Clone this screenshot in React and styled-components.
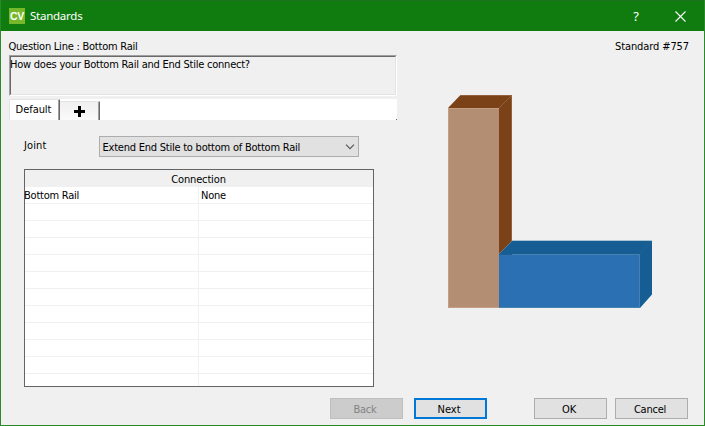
import React from "react";
import styled, { createGlobalStyle } from "styled-components";

const Global = createGlobalStyle`
  * { box-sizing: border-box; }
  body { margin: 0; background: #f0f0f0; }
`;

const Window = styled.div`
  width: 705px;
  height: 426px;
  display: flex;
  flex-direction: column;
  background: #f0f0f0;
  border: 1px solid #2a8a2a;
  border-top: 0;
  color: #000;
  font: 11px/14px "DejaVu Sans Condensed", "DejaVu Sans", sans-serif;
  font-stretch: condensed;
  overflow: hidden;
`;

const Text = styled.span`
  white-space: pre;
  letter-spacing: ${(p) => p.$ls ?? -0.23}px;
  margin-left: ${(p) => p.$shift || 0}px;
`;

const TitleBar = styled.header`
  height: 31px;
  flex: none;
  margin: 0 -1px;
  padding: 0 19px 0 9px;
  display: flex;
  align-items: center;
  background: #107c10;
  border-top: 1px solid #1c751c;
  color: #fff;
  font: 11.5px/16px "Noto Sans", sans-serif;
`;

const Logo = styled.span`
  width: 16px;
  height: 16px;
  margin-right: 5px;
  background: #76b82a;
  font: bold 10.5px/16px "Liberation Sans", sans-serif;
  text-align: center;
  letter-spacing: -0.3px;
`;

const TitleIcons = styled.div`
  margin-left: auto;
  display: flex;
  align-items: center;
  gap: 36px;
`;

const HelpMark = styled.span`
  font-size: 13px;
`;

const Content = styled.main`
  flex: none;
  height: 356px;
  display: flex;
`;

const Left = styled.section`
  width: 388px;
  margin-left: 8px;
  padding-top: 9px;
  display: flex;
  flex-direction: column;
`;

const Right = styled.section`
  flex: 1;
  padding: 9px 15px 0 0;
  display: flex;
  flex-direction: column;
  align-items: flex-end;
`;

const Question = styled.div`
  height: 41px;
  margin-top: 1px;
  border: 1px solid;
  border-color: #a0a0a0 #fff #fff #a0a0a0;
`;

const QuestionInner = styled.div`
  height: 39px;
  border: 1px solid;
  border-color: #696969 #e3e3e3 #e3e3e3 #696969;
  line-height: 15px;
`;

const Tabs = styled.div`
  height: 21px;
  margin-top: 3px;
  background: linear-gradient(#696969, #696969) right bottom / 1px 1px no-repeat #fff;
  display: flex;
  align-items: flex-end;
`;

const Tab = styled.div`
  width: ${(p) => p.$w}px;
  height: ${(p) => p.$h}px;
  border-top: 1px solid #e3e3e3;
  border-left: ${(p) => (p.$active ? "1px solid #e3e3e3" : "0")};
  border-right: 1px solid #696969;
  box-shadow: inset -1px 0 #a0a0a0;
  border-top-right-radius: 1px;
  background: ${(p) => (p.$active ? "#fff" : "linear-gradient(#f0f0f0, #fafafa)")};
  display: flex;
  align-items: center;
  justify-content: center;
  padding: 0 2px ${(p) => (p.$active ? 1 : 3)}px 0;
`;

const Plus = styled.svg`
  margin-top: 4px;
  margin-left: 1px;
`;

const Field = styled.div`
  display: flex;
  align-items: flex-start;
  margin: 16px 0 0 15px;
`;

const FieldLabel = styled.label`
  width: 75px;
  padding-top: 3px;
`;

const Select = styled.div`
  width: 260px;
  height: 21px;
  padding: 2px 3px 0 3px;
  display: flex;
  align-items: center;
  justify-content: space-between;
  background: #e1e1e1;
  border: 1px solid #adadad;
`;

const Chevron = styled.svg`
  margin-bottom: 1px;
`;

const Table = styled.div`
  width: 350px;
  height: 218px;
  margin: 12px 0 0 15px;
  border: 1px solid #646464;
  background: #fff;
`;

const TableHead = styled.div`
  height: 17px;
  background: #f0f0f0;
  text-align: center;
  line-height: 19px;
`;

const TableBody = styled.div`
  height: 199px;
  display: flex;
  flex-direction: column;
`;

const Row = styled.div`
  flex: 0 1 17px;
  height: 17px;
  min-height: ${(p) => (p.$last ? "0" : "17px")};
  display: grid;
  grid-template-columns: 174px 1fr;
  border-bottom: ${(p) => (p.$last ? "0" : "1px solid #f0f0f0")};
  line-height: 17px;
`;

const Cell = styled.div`
  padding-left: ${(p) => p.$pad || 0}px;
  border-right: ${(p) => (p.$line ? "1px solid #f0f0f0" : "0")};
`;

const Drawing = styled.svg`
  margin: 40px 36px 0 0;
`;

const Footer = styled.footer`
  display: flex;
  justify-content: flex-end;
  padding: 11px 16px 0 0;
`;

const Button = styled.button`
  width: 73px;
  height: 21px;
  padding: 2px 3px 0 0;
  margin: 0 0 0 ${(p) => p.$gap}px;
  font: inherit;
  line-height: ${(p) => (p.$primary ? 15 : 16)}px;
  color: ${(p) => (p.disabled ? "#838383" : "#000")};
  background: ${(p) => (p.disabled ? "#cccccc" : "#e1e1e1")};
  border: ${(p) => (p.$primary ? "2px solid #0078d7" : `1px solid ${p.disabled ? "#bfbfbf" : "#adadad"}`)};
`;

const rows = [["Bottom Rail", "None"], ...Array.from({ length: 11 }, () => ["", ""])];

export default function App() {
  return (
    <Window>
      <Global />
      <TitleBar>
        <Logo>CV</Logo>
        <Text $ls={-0.25}>Standards</Text>
        <TitleIcons>
          <HelpMark>?</HelpMark>
          <svg width="11" height="11" viewBox="0 0 11 11" stroke="#fff" strokeWidth="1.1">
            <path d="M.5.5l10 10M10.500.5l-10 10" />
          </svg>
        </TitleIcons>
      </TitleBar>
      <Content>
        <Left>
          <Text $shift={-0.5}>Question Line : Bottom Rail</Text>
          <Question>
            <QuestionInner>
              <Text $shift={-1}>How does your Bottom Rail and End Stile connect?</Text>
            </QuestionInner>
          </Question>
          <Tabs>
            <Tab $active $w={51} $h={21}><Text $ls={-0.05}>Default</Text></Tab>
            <Tab $w={40} $h={19}>
              <Plus width="11" height="11" viewBox="0 0 11 11"><path d="M4 0h3v4h4v3H7v4H4V7H0V4h4z" /></Plus>
            </Tab>
          </Tabs>
          <Field>
            <FieldLabel><Text $ls={0.1}>Joint</Text></FieldLabel>
            <Select>
              <Text $shift={-0.5}>Extend End Stile to bottom of Bottom Rail</Text>
              <Chevron width="10" height="6" viewBox="0 0 10 6" fill="none" stroke="#555" strokeWidth="1.1">
                <path d="M1 .7l4 4 4-4" />
              </Chevron>
            </Select>
          </Field>
          <Table>
            <TableHead><Text $ls={-0.15} $shift={-1}>Connection</Text></TableHead>
            <TableBody>
              {rows.map(([name, value], i) => (
                <Row key={i} $last={i === rows.length - 1}>
                  <Cell $line>{name && <Text $shift={-1}>{name}</Text>}</Cell>
                  <Cell $pad={2}>{value && <Text>{value}</Text>}</Cell>
                </Row>
              ))}
            </TableBody>
          </Table>
        </Left>
        <Right>
          <Text $ls={-0.1}>Standard #757</Text>
          <Drawing width="205" height="214" viewBox="448 94 205 214">
            <path d="M448 108L460.500 95H512V241L499 254V108Z" fill="#7b4218" />
            <path d="M460 95.500H511.500V241M499 108l13-13" fill="none" stroke="#9b6a47" strokeWidth=".8" />
            <path d="M448 108h51v200h-51z" fill="#b48e73" />
            <path d="M448 108.500h51M448.500 108v199.500h50.500" fill="none" stroke="#c49f84" />
            <path d="M499 254L512 241H652V294.500L640 308V254Z" fill="#165d93" />
            <path d="M499 254h141v54H499z" fill="#2a70b3" />
            <path d="M512 254.500h127.500V307.500H499" fill="none" stroke="#4582ad" />
            <path d="M499 254.500h13" stroke="#205f91" />
            <path d="M512 240.500h140" stroke="#a9c4d2" />
            <path d="M640 254l12-13" stroke="#27658f" strokeWidth=".7" />
          </Drawing>
        </Right>
      </Content>
      <Footer>
        <Button disabled $gap={0}><Text>Back</Text></Button>
        <Button $primary $gap={11}><Text $ls={0}>Next</Text></Button>
        <Button $gap={47}><Text>OK</Text></Button>
        <Button $gap={8}><Text>Cancel</Text></Button>
      </Footer>
    </Window>
  );
}
